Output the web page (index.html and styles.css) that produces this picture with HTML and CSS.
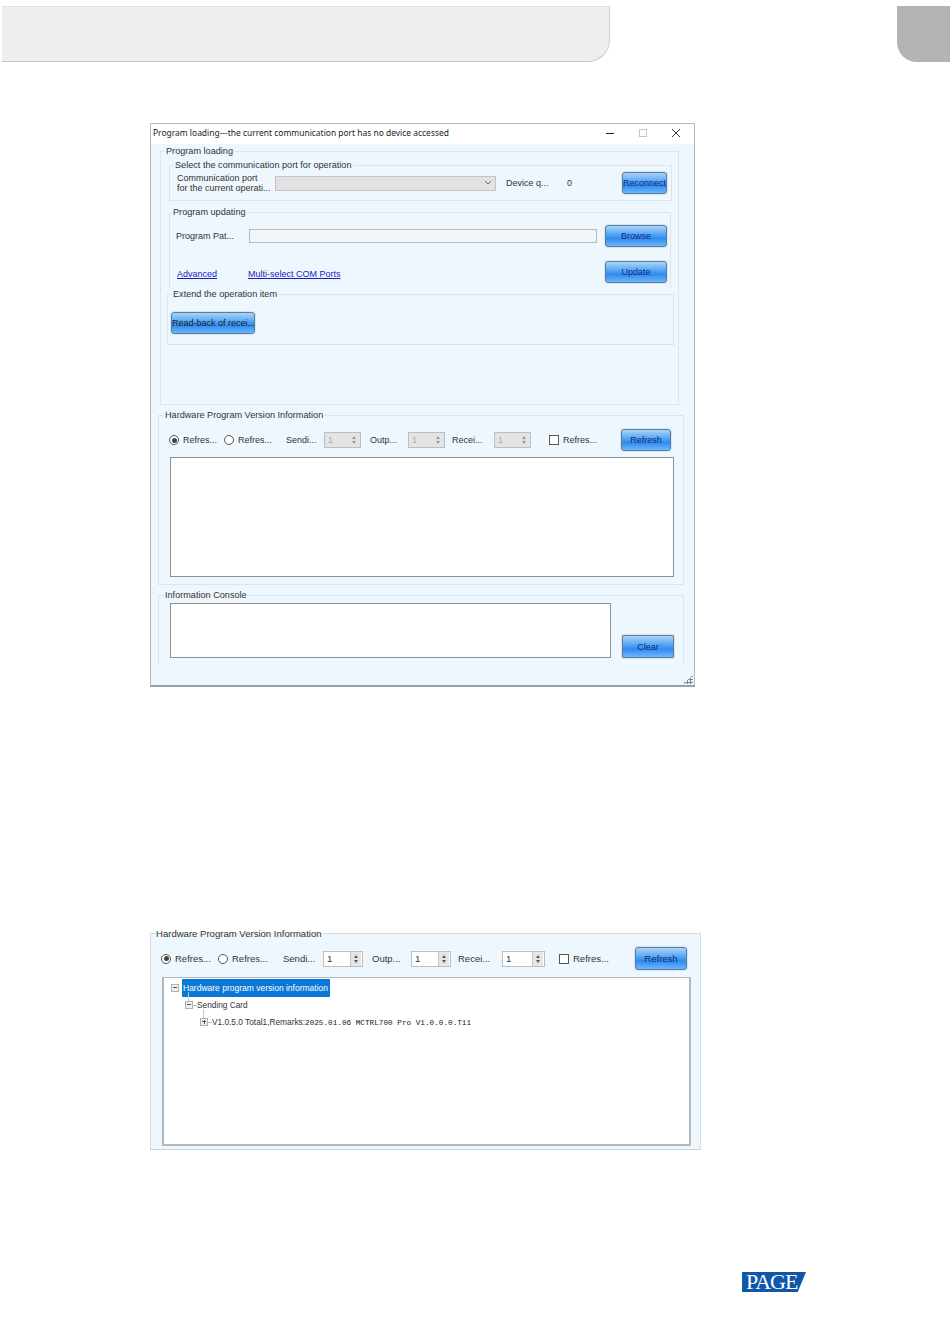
FILE: index.html
```html
<!DOCTYPE html>
<html lang="en">
<head>
  <meta charset="UTF-8" />
  <title>Program loading</title>
  <link rel="stylesheet" href="styles.css">
</head>
<body>

  <header class="page-head">
    <div class="head-tab"></div>
    <div class="head-chapter"></div>
  </header>

  <!-- first screenshot: program loading window -->
  <section class="window">
    <div class="title-bar">
      <span class="title-text">Program loading---the current communication port has no device accessed</span>
      <div class="win-buttons">
        <svg width="10" height="10" viewBox="0 0 10 10"><path d="M1 5.5H9" stroke="#222" stroke-width="1"/></svg>
        <svg width="10" height="10" viewBox="0 0 10 10"><rect x="1.5" y="1.5" width="7" height="7" fill="none" stroke="#c4c4c4"/></svg>
        <svg width="10" height="10" viewBox="0 0 10 10"><path d="M1 1L9 9M9 1L1 9" stroke="#333" stroke-width="1"/></svg>
      </div>
    </div>

    <div class="win-body">
      <fieldset class="box box-main">
        <legend>Program loading</legend>

        <fieldset class="box box-port">
          <legend>Select the communication port for operation</legend>
          <div class="port-row">
            <div class="port-label">Communication port<br>for the current operati...</div>
            <div class="combo">
              <svg width="8" height="6" viewBox="0 0 8 6"><path d="M1 1L4 4L7 1" fill="none" stroke="#666"/></svg>
            </div>
            <span class="device-label">Device q...</span>
            <span class="device-count">0</span>
            <button class="btn btn-reconnect">Reconnect</button>
          </div>
        </fieldset>

        <fieldset class="box box-update">
          <legend>Program updating</legend>
          <div class="path-row">
            <span class="path-label">Program Pat...</span>
            <div class="path-input"></div>
            <button class="btn btn-wide">Browse</button>
          </div>
          <div class="link-row">
            <a class="link link-advanced">Advanced</a>
            <a class="link link-multi">Multi-select COM Ports</a>
            <button class="btn btn-wide">Update</button>
          </div>
        </fieldset>

        <fieldset class="box box-extend">
          <legend>Extend the operation item</legend>
          <button class="btn btn-readback">Read-back of recei...</button>
        </fieldset>
      </fieldset>

      <fieldset class="box box-hw">
        <legend>Hardware Program Version Information</legend>
        <div class="opts">
          <label class="radio"><i class="dot on"></i>Refres...</label>
          <label class="radio"><i class="dot"></i>Refres...</label>
          <span>Sendi...</span>
          <div class="spin off"><span>1</span><div class="spin-arrows"><i class="up"></i><i class="down"></i></div></div>
          <span class="pad-outp">Outp...</span>
          <div class="spin off"><span>1</span><div class="spin-arrows"><i class="up"></i><i class="down"></i></div></div>
          <span class="pad-recei">Recei...</span>
          <div class="spin off"><span>1</span><div class="spin-arrows"><i class="up"></i><i class="down"></i></div></div>
          <label class="radio pad-check"><i class="tick"></i>Refres...</label>
          <button class="btn">Refresh</button>
        </div>
        <div class="text-area hw-area"></div>
      </fieldset>

      <fieldset class="box box-console">
        <legend>Information Console</legend>
        <div class="console-row">
          <div class="text-area console-area"></div>
          <button class="btn btn-clear">Clear</button>
        </div>
      </fieldset>
    </div>

    <div class="grip"></div>
  </section>

  <!-- second screenshot: version information panel -->
  <fieldset class="box panel-hw">
    <legend>Hardware Program Version Information</legend>
    <div class="opts">
      <label class="radio"><i class="dot on"></i>Refres...</label>
      <label class="radio"><i class="dot"></i>Refres...</label>
      <span>Sendi...</span>
      <div class="spin"><span>1</span><div class="spin-arrows"><i class="up"></i><i class="down"></i></div></div>
      <span class="pad-outp">Outp...</span>
      <div class="spin"><span>1</span><div class="spin-arrows"><i class="up"></i><i class="down"></i></div></div>
      <span class="pad-recei">Recei...</span>
      <div class="spin"><span>1</span><div class="spin-arrows"><i class="up"></i><i class="down"></i></div></div>
      <label class="radio pad-check"><i class="tick"></i>Refres...</label>
      <button class="btn">Refresh</button>
    </div>
    <div class="tree">
      <div class="node node-root"><i class="fold"></i><span class="node-selected">Hardware program version information</span></div>
      <div class="node node-card"><i class="fold"></i><span>Sending Card</span></div>
      <div class="node node-version"><i class="fold plus"></i><span>V1.0.5.0 Total1,Remarks:<span class="mono">2025.01.06 MCTRL700 Pro V1.0.0.0.T11</span></span></div>
    </div>
  </fieldset>

  <footer class="page-foot">
    <div class="page-logo">PAGE</div>
  </footer>

</body>
</html>
```

FILE: styles.css
```css
* {
  margin: 0;
  padding: 0;
  box-sizing: border-box;
}

html, body {
  background: #fff;
}

body {
  width: 950px;
  height: 1344px;
  overflow: hidden;
  font-family: "Liberation Sans", Arial, sans-serif;
  font-size: 9px;
  color: #333;
}

/* Page header */
.page-head {
  display: flex;
  justify-content: space-between;
  padding: 6px 0 0 2px;
}

.head-tab {
  width: 608px;
  height: 56px;
  background: #eeeeee;
  border-top: 1px solid #e0e0e0;
  border-right: 1px solid #cfcfcf;
  border-bottom: 1px solid #c4c4c4;
  border-bottom-right-radius: 22px;
}

.head-chapter {
  width: 53px;
  height: 56px;
  background: #b3b3b3;
  border-bottom-left-radius: 20px;
}

/* Window */
.window {
  position: relative;
  width: 545px;
  height: 564px;
  margin: 61px 0 0 150px;
  background: #eef7fd;
  border: 1px solid #b4b8bb;
  border-bottom: 2px solid #9aa0a4;
}

.title-bar {
  display: flex;
  align-items: center;
  justify-content: space-between;
  height: 20px;
  padding: 0 13px 3px 2px;
  background: #fff;
}

.title-text {
  font-family: "Noto Sans", sans-serif;
  font-size: 8.45px;
  color: #222;
}

.win-buttons {
  display: flex;
  gap: 23px;
}

.win-body {
  padding: 1px 10px 0 7px;
}

.box {
  border: 1px solid #dbe5ec;
  min-width: 0;
}

.box legend {
  height: 12px;
  padding: 0 1px;
  font-size: 9.15px;
  line-height: 12px;
  color: #333;
}

.box-main {
  margin: 0 5px 0 2px;
  padding: 2px 4px 59px 6px;
}

.box-main > legend {
  margin-left: -2px;
}

.box-port {
  margin: 0 2px;
  padding: 0 0 1px 7px;
}

.box-port legend {
  margin-left: -3px;
}

.port-row {
  display: flex;
  align-items: center;
  height: 24px;
  margin-bottom: 4px;
}

.port-label {
  width: 98px;
  line-height: 10px;
}

.combo {
  display: flex;
  align-items: center;
  justify-content: flex-end;
  width: 221px;
  height: 15px;
  padding-right: 3px;
  background: #e2e2e2;
  border: 1px solid #c4c4c4;
}

.device-label {
  width: 61px;
  margin-left: 10px;
}

.device-count {
  width: 55px;
}

.btn {
  flex-shrink: 0;
  width: 50px;
  height: 22px;
  font-family: "Liberation Sans", Arial, sans-serif;
  font-size: 9px;
  color: #0f2a80;
  white-space: nowrap;
  overflow: hidden;
  background: linear-gradient(#a9d3f7 0%, #6eb3f5 30%, #2f8bee 62%, #6db6fb 100%);
  border: 1px solid #5d7c99;
  border-radius: 3px;
  box-shadow: 0 0 0 1px #d3e6f5;
}

.btn-reconnect {
  width: 45px;
}

.btn-wide {
  width: 62px;
}

.btn-readback {
  display: block;
  width: 84px;
  margin-left: 3px;
  color: #123;
}

.btn-clear {
  width: 52px;
  height: 23px;
  margin-left: 11px;
  border-radius: 1px;
}

.box-update {
  height: 82px;
  margin: 5px 3px 0 2px;
  padding: 7px 0 0 6px;
  border-bottom: 0;
}

.box-update legend {
  margin-left: -4px;
}

.path-row,
.link-row {
  display: flex;
  align-items: center;
}

.path-label {
  width: 73px;
}

.path-input {
  width: 348px;
  height: 14px;
  background: #f1f5f8;
  border: 1px solid #b7bbbe;
}

.path-row .btn {
  margin-left: 8px;
}

.link-row {
  margin-top: 14px;
}

.link {
  margin-top: 4px;
  color: #1a1ac0;
  text-decoration: underline;
}

.link-advanced {
  width: 71px;
  margin-left: 1px;
}

.link-multi {
  width: 357px;
}

.box-extend {
  padding: 12px 0 10px 0;
  border-bottom-color: #d5dfe6;
}

.box-extend legend {
  margin-left: 4px;
}

.box-hw {
  margin-top: 4px;
  padding: 8px 9px 7px 10px;
}

.box-hw legend {
  margin-left: -5px;
}

.box-console legend {
  margin-left: -6px;
}

/* Option row, used by both screenshots */
.opts {
  display: grid;
  grid-template-columns: 55px 62px 38px 37px 47px 37px 49px 37px 90px 50px;
  align-items: center;
  height: 22px;
  margin-bottom: 6px;
}

.pad-outp {
  padding-left: 9px;
}

.pad-recei {
  padding-left: 7px;
}

.pad-check {
  padding-left: 18px;
}

.radio {
  display: flex;
  align-items: center;
  gap: 4px;
}

.dot {
  position: relative;
  width: 10px;
  height: 10px;
  background: #fff;
  border: 1px solid #555;
  border-radius: 50%;
}

.dot.on::after {
  content: "";
  position: absolute;
  inset: 1.5px;
  background: #444;
  border-radius: 50%;
}

.tick {
  width: 10px;
  height: 10px;
  background: #fff;
  border: 1px solid #555;
}

.spin {
  display: flex;
  align-items: center;
  justify-content: space-between;
  height: 16px;
  padding: 0 1px 0 3px;
  background: #fff;
  border: 1px solid #b8c0c6;
  color: #333;
}

.spin.off {
  background: #e4e4e4;
  color: #aaa;
}

.spin-arrows {
  display: flex;
  flex-direction: column;
  justify-content: center;
  align-items: center;
  gap: 2px;
  width: 11px;
  height: 14px;
  background: #e6e6e6;
  border-left: 1px solid #c4c4c4;
}

.spin.off .spin-arrows {
  background: transparent;
  border-left: 0;
}

.up {
  border-left: 2.5px solid transparent;
  border-right: 2.5px solid transparent;
  border-bottom: 3px solid #555;
}

.down {
  border-left: 2.5px solid transparent;
  border-right: 2.5px solid transparent;
  border-top: 3px solid #555;
}

.spin.off .up {
  border-bottom-color: #999;
}

.spin.off .down {
  border-top-color: #999;
}

.text-area {
  background: #fff;
  border: 1px solid #8a9299;
}

.hw-area {
  width: 504px;
  height: 120px;
  margin-left: 1px;
}

.box-console {
  margin-top: 4px;
  padding: 2px 9px 6px 11px;
  border-bottom: 0;
}

.console-row {
  display: flex;
  align-items: flex-end;
}

.console-area {
  width: 441px;
  height: 55px;
}

.grip {
  position: absolute;
  right: 1px;
  bottom: 1px;
  width: 10px;
  height: 9px;
  background: radial-gradient(circle, #7d858a 1px, transparent 1.2px) 0 0 / 3px 3px;
  clip-path: polygon(100% 0, 100% 100%, 0 100%);
}

/* Second screenshot */
.panel-hw {
  width: 551px;
  margin: 240px 0 0 150px;
  padding: 8px 9px 3px 10px;
  background: #eef7fe;
  border-color: #d3dde4;
  border-bottom-color: #c8d2d9;
}

.panel-hw legend {
  margin-left: -6px;
  font-size: 9.55px;
  line-height: 14px;
}

.panel-hw .opts {
  grid-template-columns: 57px 65px 40px 40px 48px 40px 51px 43px 90px 52px;
  height: 23px;
  margin-bottom: 7px;
  font-size: 9.5px;
}

.panel-hw .pad-check {
  padding-left: 14px;
}

.panel-hw .btn {
  width: 52px;
  height: 23px;
  font-size: 9.5px;
}

.tree {
  width: 529px;
  height: 169px;
  margin-left: 1px;
  padding-top: 1px;
  background: #fff;
  border: 2px solid #b0b8bf;
  border-top-width: 1px;
  font-size: 8.3px;
}

.node {
  display: flex;
  align-items: center;
  height: 17px;
}

.node-root {
  padding-left: 7px;
}

.node-card {
  padding-left: 21px;
}

.node-version {
  padding-left: 36px;
}

.node-selected {
  display: flex;
  flex-shrink: 0;
  align-items: center;
  width: 148px;
  height: 18px;
  margin-left: 3px;
  padding-left: 1px;
  white-space: nowrap;
  font-size: 8.5px;
  color: #fff;
  background: #0a78d7;
}

.fold {
  position: relative;
  width: 8px;
  height: 8px;
  margin-right: 4px;
  border: 1px solid #aab2b8;
  background: linear-gradient(#555, #555) center / 4px 1px no-repeat, #eee;
}

.plus {
  background: linear-gradient(#555, #555) center / 4px 1px no-repeat,
              linear-gradient(#555, #555) center / 1px 4px no-repeat, #eee;
}

.node-root .fold {
  margin-right: 0;
}

/* dotted tree connectors */
.node-card .fold::before,
.node-version .fold::before {
  content: "";
  position: absolute;
  top: -10px;
  left: 2px;
  width: 1px;
  height: 9px;
  background: #c8c8c8;
}

.node-card .fold::after,
.node-version .fold::after {
  content: "";
  position: absolute;
  top: 3px;
  left: 7px;
  width: 4px;
  height: 1px;
  background: #bbb;
}

.mono {
  font-family: "Liberation Mono", monospace;
  font-size: 7.7px;
  color: #222;
}

/* Page number logo */
.page-foot {
  display: flex;
  justify-content: flex-end;
  margin-top: 122px;
  padding-right: 144px;
}

.page-logo {
  width: 64px;
  height: 20px;
  padding-left: 4px;
  font-family: "Liberation Serif", serif;
  font-size: 22px;
  line-height: 20px;
  letter-spacing: -1px;
  color: #fff;
  background: #0f57a8;
  clip-path: polygon(0 0, 100% 0, 87% 100%, 0 100%);
}
```
